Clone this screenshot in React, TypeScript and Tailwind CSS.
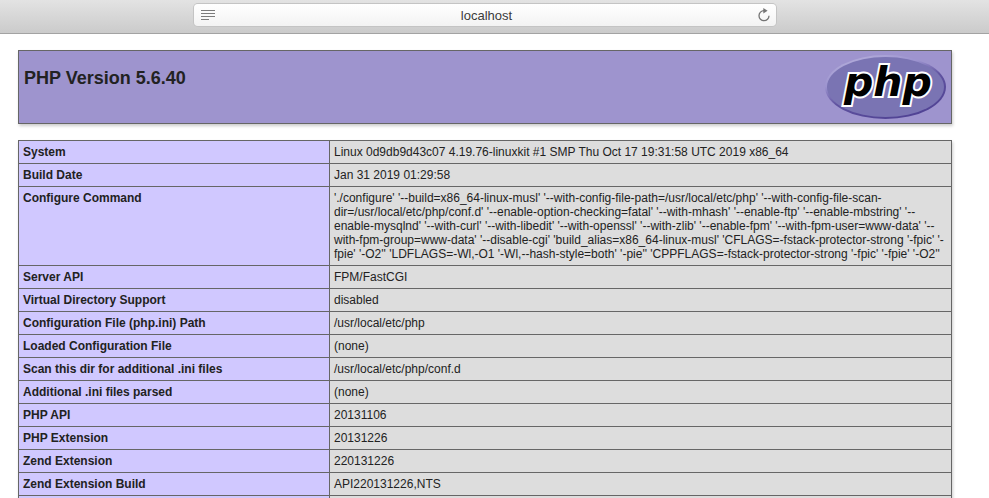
import React from 'react'

const rows = [
  { name: 'System', value: 'Linux 0d9db9d43c07 4.19.76-linuxkit #1 SMP Thu Oct 17 19:31:58 UTC 2019 x86_64' },
  { name: 'Build Date', value: 'Jan 31 2019 01:29:58' },
  {
    name: 'Configure Command',
    value:
      "'./configure' '--build=x86_64-linux-musl' '--with-config-file-path=/usr/local/etc/php' '--with-config-file-scan-dir=/usr/local/etc/php/conf.d' '--enable-option-checking=fatal' '--with-mhash' '--enable-ftp' '--enable-mbstring' '--enable-mysqlnd' '--with-curl' '--with-libedit' '--with-openssl' '--with-zlib' '--enable-fpm' '--with-fpm-user=www-data' '--with-fpm-group=www-data' '--disable-cgi' 'build_alias=x86_64-linux-musl' 'CFLAGS=-fstack-protector-strong '-fpic' '-fpie' '-O2'' 'LDFLAGS=-Wl,-O1 '-Wl,--hash-style=both' '-pie'' 'CPPFLAGS=-fstack-protector-strong '-fpic' '-fpie' '-O2''",
  },
  { name: 'Server API', value: 'FPM/FastCGI' },
  { name: 'Virtual Directory Support', value: 'disabled' },
  { name: 'Configuration File (php.ini) Path', value: '/usr/local/etc/php' },
  { name: 'Loaded Configuration File', value: '(none)' },
  { name: 'Scan this dir for additional .ini files', value: '/usr/local/etc/php/conf.d' },
  { name: 'Additional .ini files parsed', value: '(none)' },
  { name: 'PHP API', value: '20131106' },
  { name: 'PHP Extension', value: '20131226' },
  { name: 'Zend Extension', value: '220131226' },
  { name: 'Zend Extension Build', value: 'API220131226,NTS' },
]

function PhpLogo() {
  return (
    <svg width="121" height="67" viewBox="0 0 121 67" role="img" aria-label="PHP logo">
      <defs>
        <linearGradient id="rim" x1="0.2" y1="0" x2="0.75" y2="1">
          <stop offset="0" stopColor="#b5afdb" />
          <stop offset="0.3" stopColor="#9c93cf" />
          <stop offset="0.55" stopColor="#5f529f" />
          <stop offset="1" stopColor="#4f4193" />
        </linearGradient>
      </defs>
      <ellipse cx="60.5" cy="32" rx="60.5" ry="32" fill="url(#rim)" />
      <ellipse cx="60.5" cy="32" rx="58.5" ry="30" fill="#7a74b3" />
      <text
        x="19"
        y="41"
        fontFamily="DejaVu Sans, Verdana, sans-serif"
        fontSize="41"
        fontWeight="bold"
        fontStyle="italic"
        fill="#000"
        stroke="#fff"
        strokeWidth="4"
        paintOrder="stroke"
      >
        php
      </text>
    </svg>
  )
}

function Toolbar() {
  return (
    <header className="border-b border-[#a3a3a3] bg-linear-to-b from-[#e3e3e3] to-[#cbcbcb] pt-1 pr-[213px] pb-[7px] pl-[194px]">
      <div className="flex h-[22px] items-center rounded bg-linear-to-b from-white to-[#f3f3f3] pr-1.5 pl-[7px] ring-1 ring-[#c4c4c4]">
        <button type="button" aria-label="Reader view">
          <svg width="14" height="12" viewBox="0 0 14 12" fill="#7b7b7b">
            <path d="M0 1h14v1H0zM0 4h14v1H0zM0 7h14v1H0zM0 10h8v1H0z" />
          </svg>
        </button>
        <input
          type="text"
          aria-label="Address"
          defaultValue="localhost"
          className="min-w-0 flex-1 bg-transparent pt-0.5 text-center text-[13px] leading-5 text-[#3a3a3a] outline-none"
        />
        <button type="button" aria-label="Reload">
          <svg width="12" height="14" viewBox="0 0 12 14">
            <path d="M6.5 2.7H6a5 5 0 1 0 5 5" fill="none" stroke="#747474" strokeWidth="1.3" />
            <path d="M5.3 0l4.3 2.7-4.3 2.7z" fill="#747474" />
          </svg>
        </button>
      </div>
    </header>
  )
}

export default function App() {
  return (
    <div className="h-screen overflow-hidden bg-white font-['Liberation_Sans',Arial,sans-serif] text-[#222]">
      <Toolbar />
      <main className="pt-4 pr-[37px] pl-[18px]">
        <div className="flex justify-between border border-[#666] bg-[#9e94ce] px-[5px] py-1 shadow-[1px_2px_3px_#ccc]">
          <h1 className="pt-3 text-lg leading-[22px] font-bold">PHP Version 5.6.40</h1>
          <a href="http://www.php.net/" className="block h-16">
            <PhpLogo />
          </a>
        </div>
        <table className="mt-4 w-full border-collapse text-xs leading-[14px] shadow-[1px_2px_3px_#ccc]">
          <tbody>
            {rows.map(row => (
              <tr key={row.name}>
                <th scope="row" className="w-1/3 border border-[#666] bg-[#d0c8ff] p-1 text-left align-baseline font-bold">
                  {row.name}
                </th>
                <td className="border border-[#666] bg-[#ddd] p-1 align-baseline">{row.value}</td>
              </tr>
            ))}
            <tr className="h-6">
              <th className="border border-[#666] bg-[#d0c8ff]" />
              <td className="border border-[#666] bg-[#ddd]" />
            </tr>
          </tbody>
        </table>
      </main>
    </div>
  )
}
